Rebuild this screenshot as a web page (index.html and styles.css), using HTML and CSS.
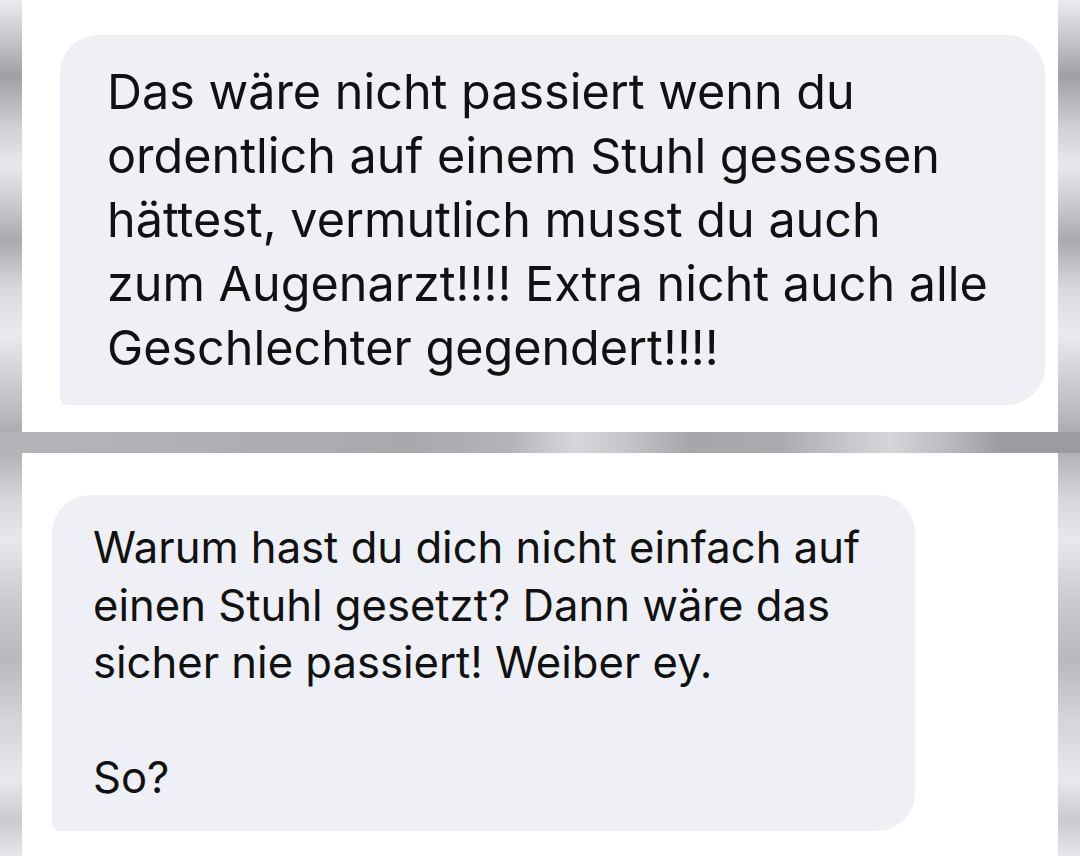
FILE: index.html
```html
<!DOCTYPE html>
<html lang="de">
<head>
  <meta charset="UTF-8" />
  <meta name="viewport" content="width=device-width, initial-scale=1.0"/>
  <title>Nachrichten</title>
  <link rel="stylesheet" href="styles.css">
</head>
<body>

  <div class="rahmen">
    <div class="panel panel-oben">
      <div class="blase blase-gross">
        Das wäre nicht passiert wenn du<br>
        ordentlich auf einem Stuhl gesessen<br>
        hättest, vermutlich musst du auch<br>
        zum Augenarzt!!!! Extra nicht auch alle<br>
        Geschlechter gegendert!!!!
      </div>
    </div>

    <div class="trenner"></div>

    <div class="panel panel-unten">
      <div class="blase blase-klein">
        Warum hast du dich nicht einfach auf<br>
        einen Stuhl gesetzt? Dann wäre das<br>
        sicher nie passiert! Weiber ey.<br>
        <br>
        So?
      </div>
    </div>
  </div>

</body>
</html>
```

FILE: styles.css
```css
body {
  margin: 0;
  padding: 0;
  font-family: Inter, Roboto, sans-serif;
  color: #111;
  background: linear-gradient(to bottom,
    #e9ebf0 0px,
    #c4c6cb 40px,
    #9ea0a5 75px,
    #d0d2d7 130px,
    #e6e8ed 165px,
    #c8cad0 205px,
    #a8aaaf 240px,
    #d8dadf 290px,
    #e8eaef 335px,
    #c0c2c7 400px,
    #a6a8ad 440px,
    #d6d8dd 500px,
    #e6e8ed 540px,
    #c9cbd0 600px,
    #b7b9be 660px,
    #d3d5da 720px,
    #e6e8ed 780px,
    #c9cbd0 820px,
    #e4e6eb 856px);
  height: 856px;
  overflow: hidden;
}

.rahmen {
  display: flex;
  flex-direction: column;
  height: 856px;
}

.panel {
  margin: 0 22px;
  background-color: #fff;
}

.panel-oben {
  height: 432px;
  padding: 35px 13px 0 38px;
  box-sizing: border-box;
}

.panel-unten {
  flex: 1;
  padding: 42px 0 0 30px;
  box-sizing: border-box;
}

.trenner {
  height: 21px;
  flex-shrink: 0;
  background: linear-gradient(to right,
    #b3b5b9 0px,
    #aeb0b4 200px,
    #a7a9ad 410px,
    #b2b4b8 510px,
    #d5d7db 575px,
    #c6c8cc 620px,
    #a5a7ab 690px,
    #a9abaf 780px,
    #c6c8cc 850px,
    #d4d6da 890px,
    #b8babe 950px,
    #9b9da1 1000px,
    #9a9ca0 1080px);
}

.blase {
  background-color: #eef0f5;
  border-radius: 38px 38px 38px 8px;
  white-space: nowrap;
}

.blase-gross {
  height: 370px;
  box-sizing: border-box;
  padding: 25px 0 0 47px;
  font-size: 48.5px;
  line-height: 64px;
}

.blase-klein {
  width: 863px;
  height: 336px;
  box-sizing: border-box;
  padding: 24px 0 0 41px;
  font-size: 43.6px;
  line-height: 57.5px;
}
```
